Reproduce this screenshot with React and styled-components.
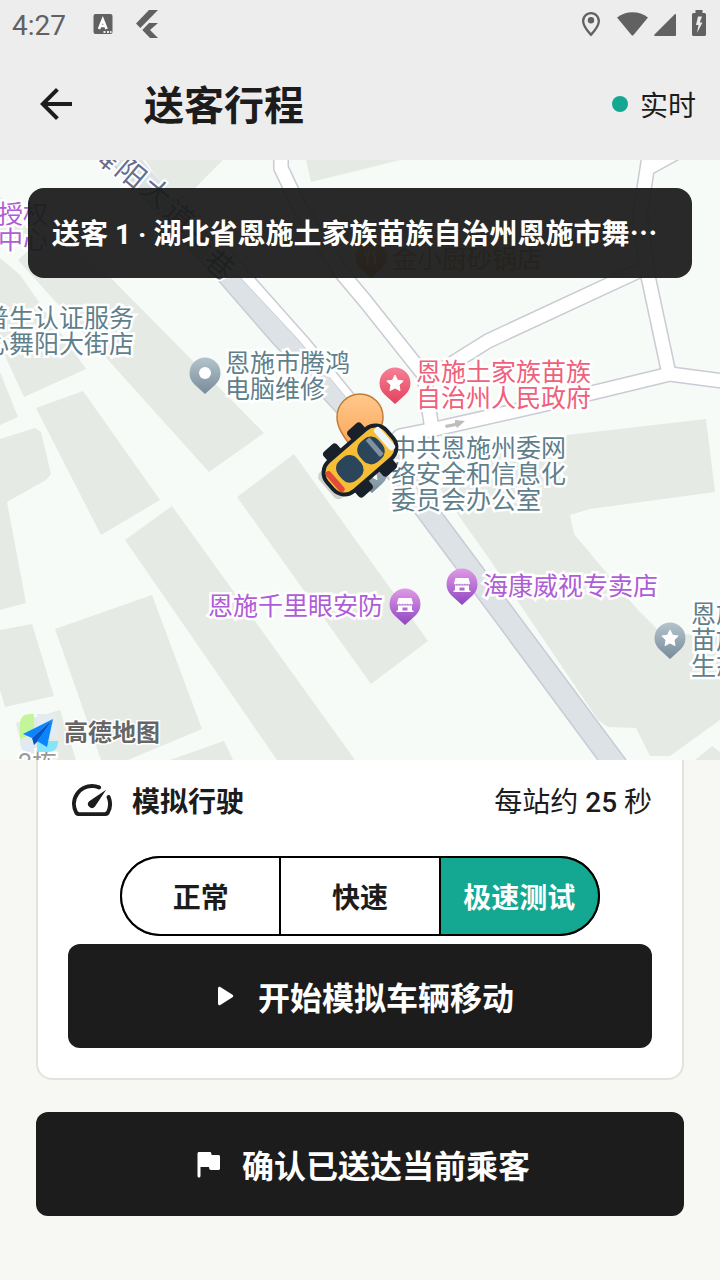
import React, { useState } from "react";
import styled, { createGlobalStyle } from "styled-components";

const ink = "#1b1c1b";
const teal = "#14a892";
const statusGrey = "#616161";
const poi = { slate: "#5f7f8c", purple: "#ae5dd6", rose: "#f0607a", amber: "#d08a50", grey: "#9a9a9a" };

const GlobalStyle = createGlobalStyle`
  *, *::before, *::after { box-sizing: border-box; }
  body {
    margin: 0;
    background: #f7f8f3;
    color: ${ink};
    font-family: Roboto, "Noto Sans CJK SC", sans-serif;
  }
  button { font: inherit; }
`;

const Screen = styled.div`
  min-height: 100vh;
  display: flex;
  flex-direction: column;
`;

const StatusBar = styled.div`
  height: 48px;
  padding: 0 12px;
  display: flex;
  align-items: center;
  justify-content: space-between;
  background: #ededed;
  color: ${statusGrey};
`;

const StatusGroup = styled.div`
  display: flex;
  align-items: center;
  gap: ${(p) => p.$gap}px;
`;

const Clock = styled.span`
  font-size: 28px;
  line-height: 32px;
  padding-top: 4px;
`;

const AppBar = styled.header`
  height: 112px;
  padding: 0 24px 0 32px;
  display: flex;
  align-items: center;
  background: #ededed;
`;

const BackButton = styled.button`
  display: flex;
  padding: 0;
  border: 0;
  background: none;
  color: inherit;
`;

const Title = styled.h1`
  flex: 1;
  margin: 0 0 0 64px;
  padding-top: 6px;
  font-size: 40px;
  line-height: 48px;
  font-weight: 700;
`;

const LiveStatus = styled.div`
  display: flex;
  align-items: center;
  gap: 12px;
`;

const LiveText = styled.span`
  padding-top: 6px;
  font-size: 28px;
  line-height: 40px;
`;

const LiveDot = styled.span`
  width: 16px;
  height: 16px;
  border-radius: 50%;
  background: ${teal};
`;

const MapView = styled.section`
  position: relative;
  height: 600px;
  overflow: hidden;
  background: #f6fbf8;
`;

const MapCanvas = styled.div`
  position: absolute;
  top: 0;
  left: calc(50% - 360px);
  width: 720px;
  height: 600px;
`;

const MapLayer = styled.svg`
  position: absolute;
  inset: 0;
  width: 100%;
  height: 100%;
`;

const MapLabel = styled.span`
  position: absolute;
  left: ${(p) => p.$x}px;
  top: ${(p) => p.$y}px;
  color: ${(p) => poi[p.$tone]};
  font-size: 25px;
  line-height: 26px;
  white-space: pre;
  -webkit-text-stroke: 5px #fff;
  paint-order: stroke fill;
`;

const MapBrand = styled.div`
  position: absolute;
  left: 18px;
  top: 552px;
  display: flex;
  align-items: center;
  gap: 4px;
  color: #666;
  font-size: 24px;
  line-height: 42px;
  font-weight: 700;
  -webkit-text-stroke: 3px #fff;
  paint-order: stroke fill;
`;

const StopBanner = styled.div`
  position: absolute;
  top: 28px;
  left: 28px;
  right: 28px;
  height: 90px;
  padding: 0 24px;
  border-radius: 16px;
  background: rgba(27, 28, 27, 0.94);
  color: #fff;
  font-size: 28px;
  line-height: 94px;
  font-weight: 700;
  white-space: nowrap;
  overflow: hidden;
`;

const Panel = styled.main`
  padding: 0 36px 64px;
  display: flex;
  flex-direction: column;
  gap: 32px;
`;

const Card = styled.section`
  padding: 16px 30px 30px;
  border: 2px solid #e2e3dd;
  border-top: 0;
  border-radius: 0 0 16px 16px;
  background: #fff;
`;

const CardHeader = styled.div`
  display: flex;
  align-items: center;
  gap: 16px;
  height: 48px;
  margin-bottom: 32px;
  font-size: 28px;
  line-height: 40px;
`;

const CardTitle = styled.h2`
  flex: 1;
  margin: 0;
  padding-top: 6px;
  font-size: 28px;
  font-weight: 700;
`;

const Estimate = styled.span`
  padding-top: 6px;
  b { font-weight: 500; }
`;

const SpeedOptions = styled.fieldset`
  display: grid;
  grid-template-columns: repeat(3, 1fr);
  gap: 2px;
  width: 480px;
  max-width: 100%;
  height: 80px;
  margin: 0 auto 8px;
  padding: 0;
  border: 2px solid #000;
  border-radius: 40px;
  background: #000;
  overflow: hidden;
`;

const SpeedOption = styled.label`
  display: flex;
  align-items: center;
  justify-content: center;
  background: #fff;
  font-size: 28px;
  font-weight: 700;
  cursor: pointer;
  &:has(input:checked) { background: ${teal}; color: #fff; }
  &:has(input:focus-visible) { text-decoration: underline; }
`;

const HiddenRadio = styled.input`
  appearance: none;
  width: 0;
  height: 0;
  margin: 0;
`;

const ActionButton = styled.button`
  width: 100%;
  height: 104px;
  padding: 0;
  display: flex;
  align-items: center;
  justify-content: center;
  gap: 16px;
  border: 0;
  border-radius: 12px;
  background: ${ink};
  color: #fff;
`;

const ActionText = styled.span`
  padding-top: 6px;
  font-size: 32px;
  line-height: 48px;
  font-weight: 700;
`;

const Icon = ({ size, d }) => (
  <svg width={size} height={size} viewBox="0 0 24 24" fill="currentColor" aria-hidden="true">
    <path d={d} />
  </svg>
);

const icons = {
  back: "M20 11H7.83l5.59-5.59L12 4l-8 8 8 8 1.41-1.41L7.83 13H20v-2z",
  speed:
    "M19.46 10a1 1 0 0 0-.07 1 7.55 7.55 0 0 1 .52 1.81 8 8 0 0 1-.69 4.73 1 1 0 0 1-.89.53H5.68a1 1 0 0 1-.89-.54A8 8 0 0 1 13 6.06a7.69 7.69 0 0 1 2.11.56 1 1 0 0 0 1-.07 1 1 0 0 0-.17-1.76A10 10 0 0 0 3.35 19a2 2 0 0 0 1.72 1h13.85a2 2 0 0 0 1.74-1 10 10 0 0 0 .55-8.89 1 1 0 0 0-1.75-.11zM10.59 12.59a2 2 0 0 0 2.83 2.83l5.66-8.49z",
  play: "M8 6.82v10.36c0 .79.87 1.27 1.54.84l8.14-5.18c.62-.39.62-1.29 0-1.69L9.54 5.98C8.87 5.55 8 6.03 8 6.82z",
  flag: "M14.4 6l-.24-1.2c-.09-.46-.5-.8-.98-.8H6c-.55 0-1 .45-1 1v15c0 .55.45 1 1 1s1-.45 1-1v-6h5.6l.24 1.2c.09.47.5.8.98.8H19c.55 0 1-.45 1-1V7c0-.55-.45-1-1-1h-4.6z",
};

const buildings = [
  "18,260 60,222 110,277 264,433 209,472",
  "0,258 20,275 86,369 24,397 0,345",
  "0,372 18,417 0,425",
  "0,197 28,222 50,250 0,240",
  "36,408 83,391 160,500 101,535",
  "0,439 35,428 41,432 51,474 46,480 7,502 26,603 0,610",
  "172,506 125,540 277,760 355,760",
  "294,454 237,497 371,684 428,641",
  "55,629 152,595 202,729 128,760 101,760",
  "170,760 224,741 233,760",
  "0,630 32,624 54,696 5,707 0,690",
  "16,723 60,710 76,760 25,760",
  "440,489 500,446 567,435 706,419 715,492 590,509 570,515 574,534 638,610 660,632 720,637 720,720 670,756 650,756 636,728 608,727 598,720 490,560",
  "695,760 712,746 720,752 720,760",
  "145,160 223,160 194,189 165,189",
  "306,160 400,160 360,170 311,182",
];

const roads = [
  "M281 150V168L298 204L340 271L366 302L424 375L432 430",
  "M650 150L640 215L648 276L669 374",
  "M650 167L690 145",
  "M647 267L488 341L448 366L424 382",
  "M730 382L670 374L550 403L435 429L400 436L388 450",
];

const shopGlyph = (
  <g>
    <path d="M-6.5 -27H6.5L8 -21.5Q6.700 -19.500 5.300 -21.500Q4 -19.500 2.700 -21.500Q1.300 -19.500 0 -21.500Q-1.300 -19.500 -2.700 -21.500Q-4 -19.500 -5.300 -21.500Q-6.700 -19.500 -8 -21.500Z" fill="#fff" />
    <path d="M-7 -19.500H7V-14.500H8.500V-13H-8.500V-14.500H-7ZM-2.500 -17.500V-14.500H2.500V-17.500Z" fill="#fff" fillRule="evenodd" />
  </g>
);
const starGlyph = (
  <path d="M0 -29L2.500 -23.800L8.200 -23L4 -19L5 -13.400L0 -16.100L-5 -13.400L-4 -19L-8.200 -23L-2.500 -23.800Z" fill="#fff" stroke="#fff" strokeLinejoin="round" />
);
const forkGlyph = (
  <path d="M-5 -28V-22M-2 -28V-22M-3.500 -24V-13M4 -28Q1 -24 4 -21V-13" stroke="#fff" strokeWidth="2" fill="none" />
);
const dotGlyph = <circle cy="-21" r="6" fill="#fff" />;

const Pin = ({ x, y, tone, children }) => (
  <g transform={`translate(${x} ${y})`}>
    <path d="M0 0L-10.500 -9.500A15.500 15.500 0 1 1 10.500 -9.500Z" fill={`url(#pin-${tone})`} />
    {children}
  </g>
);

const pinTones = {
  slate: ["#b4c4cc", "#778b99"],
  rose: ["#f58096", "#e4425c"],
  purple: ["#e09ae6", "#8e46c0"],
  amber: ["#ffb870", "#e07b20"],
};

const labels = [
  { x: -2, y: 42, tone: "purple", text: "授权\n中心" },
  { x: -16, y: 146, tone: "slate", text: "普生认证服务\n心舞阳大街店" },
  { x: 392, y: 87, tone: "amber", text: "金小厨砂锅店" },
  { x: 225, y: 191, tone: "slate", text: "恩施市腾鸿\n电脑维修" },
  { x: 416, y: 200, tone: "rose", text: "恩施土家族苗族\n自治州人民政府" },
  { x: 391, y: 276, tone: "slate", text: "中共恩施州委网\n络安全和信息化\n委员会办公室" },
  { x: 208, y: 434, tone: "purple", text: "恩施千里眼安防" },
  { x: 483, y: 414, tone: "purple", text: "海康威视专卖店" },
  { x: 691, y: 442, tone: "slate", text: "恩施\n苗族\n生态" },
  { x: 18, y: 591, tone: "grey", text: "2栋" },
];

const streetName = [
  ["舞", 105, 155],
  ["阳", 131, 174],
  ["大", 156, 193],
  ["道", 179, 216],
  ["一", 200, 240],
  ["巷", 219, 265],
];

const CityMap = () => (
  <MapCanvas>
    <MapLayer viewBox="0 160 720 600" aria-hidden="true">
      <defs>
        {Object.entries(pinTones).map(([name, [a, b]]) => (
          <linearGradient key={name} id={`pin-${name}`} x1="0" y1="0" x2="0" y2="1">
            <stop offset="0" stopColor={a} />
            <stop offset="1" stopColor={b} />
          </linearGradient>
        ))}
      </defs>
      <g fill="#e6eae4">
        {buildings.map((points) => (
          <polygon key={points} points={points} />
        ))}
      </g>
      <path d="M180 198L242 280L298 340L360 415L395 450L388 436L353 393L310 340L255 278L182 196Z" fill="#fff" stroke="#cacbd4" strokeWidth="1.500" />
      <g fill="none" strokeLinejoin="round">
        {roads.map((d) => <path key={d} d={d} stroke="#cacbd4" strokeWidth="16" />)}
        {roads.map((d) => <path key={d} d={d} stroke="#fff" strokeWidth="13" />)}
      </g>
      <path
        d="M105 155L218 280L270 340L338 414L415 513L450 560L598 760H626L477 560L442 513L405 460L360 415L298 340L242 280L138 155Z"
        fill="#dde2e6"
      />
      <path d="M105 155L218 280L270 340L338 414L415 513L450 560L598 760M626 760L477 560L442 513L420 482" fill="none" stroke="#cacbd4" strokeWidth="1.500" />
      <path d="M445 425L455 423V420L465 421L457 428L456 426L446 428Z" fill="#bdbdbd" />
      <g fontSize="29" fill="#646f8e" stroke="#fff" strokeWidth="4" paintOrder="stroke" textAnchor="middle">
        {streetName.map(([char, x, y]) => (
          <text key={char} transform={`translate(${x} ${y}) rotate(40)`} dy="10">{char}</text>
        ))}
      </g>
      <Pin x={205} y={394} tone="slate">{dotGlyph}</Pin>
      <Pin x={371} y={278} tone="amber">{forkGlyph}</Pin>
      <Pin x={395} y={404} tone="rose">{starGlyph}</Pin>
      <Pin x={372} y={493} tone="slate">{starGlyph}</Pin>
      <Pin x={405} y={625} tone="purple">{shopGlyph}</Pin>
      <Pin x={462} y={605} tone="purple">{shopGlyph}</Pin>
      <Pin x={670} y={659} tone="slate">{starGlyph}</Pin>
    </MapLayer>
    {labels.map(({ x, y, tone, text }) => (
      <MapLabel key={text} $x={x} $y={y} $tone={tone}>{text}</MapLabel>
    ))}
    <MapLayer viewBox="0 160 720 600" role="img" aria-label="车辆位置">
      <defs>
        <linearGradient id="stop-pin" x1="0" y1="0" x2="0" y2="1">
          <stop offset="0" stopColor="#ffc98c" />
          <stop offset="1" stopColor="#f99a4a" />
        </linearGradient>
      </defs>
      <path d="M360 462C354 446 337 434 337 417A23 23 0 0 1 383 417C383 434 366 446 360 462Z" fill="url(#stop-pin)" stroke="#c07c38" strokeWidth="1.500" />
      <g transform="translate(360 460) rotate(-41)">
        <rect x="-44" y="-17" width="12" height="34" rx="6" fill="#000" opacity=".16" />
        <g fill="#18202a">
          <rect x="-25" y="-30" width="18" height="15" rx="4" />
          <rect x="7" y="-30" width="18" height="15" rx="4" />
          <rect x="-25" y="15" width="18" height="15" rx="4" />
          <rect x="7" y="15" width="18" height="15" rx="4" />
        </g>
        <rect x="-39.500" y="-19.500" width="79" height="39" rx="15" fill="#f6bd35" stroke="#18202a" strokeWidth="4" />
        <rect x="-36" y="-13" width="6" height="26" rx="3" fill="#e04b3c" />
        <rect x="29" y="-14" width="7" height="28" rx="3" fill="#eef6fd" />
        <rect x="-26" y="-13" width="25" height="26" rx="10" fill="#2b465a" />
        <rect x="2" y="-13" width="25" height="26" rx="10" fill="#2b465a" />
        <rect x="17" y="-11" width="5" height="22" rx="1" fill="#8291a2" />
      </g>
    </MapLayer>
    <MapBrand>
      <svg width="42" height="42" viewBox="0 0 42 42" aria-hidden="true">
        <path d="M16 2V22L2 27V12Q2 2 12 2Z" fill="#c3f59a" />
        <path d="M19 2H30Q40 2 40 12V26H19Z" fill="#e3ecf0" />
        <path d="M2 29H16V40H12Q2 40 2 29Z" fill="#dfeaf2" />
        <path d="M19 29H40Q40 40 30 40H19Z" fill="#84e4fb" />
        <path d="M35 7L5 22L14 26Z" fill="#0a84ff" />
        <path d="M35 7L14 26L16 33L20 29Z" fill="#0654c8" />
        <path d="M35 7L19 29L29 35Z" fill="#0a84ff" />
      </svg>
      高德地图
    </MapBrand>
  </MapCanvas>
);

const speeds = ["正常", "快速", "极速测试"];

export default function App() {
  const [speed, setSpeed] = useState("极速测试");
  return (
    <Screen>
      <GlobalStyle />
      <StatusBar>
        <StatusGroup $gap={24}>
          <Clock>4:27</Clock>
          <svg width="68" height="28" viewBox="0 0 68 28" fill="currentColor" aria-hidden="true">
            <path d="M5.500 4H20.500Q22.500 4 22.500 6V22Q22.500 24 20.500 24H5.500Q3.500 24 3.500 22V6Q3.500 4 5.500 4Z" />
            <path d="M9 19L12.800 9.500L16.600 19M10.300 16H15.300" fill="none" stroke="#fff" strokeWidth="2.600" />
            <path d="M13.500 21H15.500V23H13.500ZM17 21H19V23H17ZM20 21H21.500V23H20Z" fill="#ededed" />
            <path d="M68 0H59L46 13.500L50.300 18ZM68 13H59L52.300 20L60 28H68L60 20Z" />
          </svg>
        </StatusGroup>
        <svg width="128" height="28" viewBox="580 10 128 28" fill="currentColor" aria-hidden="true">
          <path d="M591 12C586 12 582 16 582 21C582 27.500 591 36.500 591 36.500S600 27.500 600 21C600 16 596 12 591 12ZM591 33C588.500 30 584.300 25 584.300 21A6.700 6.700 0 0 1 597.700 21C597.700 25 593.500 30 591 33Z" fillRule="evenodd" />
          <circle cx="591" cy="20.300" r="3.200" />
          <path d="M617 17.500C626 10.500 639 10.500 648 17.500L633.500 35Q632.500 36 631.500 35Z" />
          <path d="M676 15V35Q676 36 675 36H655Q653.500 36 654.500 34.500L674.500 14.500Q676 13.500 676 15Z" />
          <path d="M695.500 10H702.500V13H704.500Q706 13 706 14.500V34.500Q706 36 704.500 36H693.500Q692 36 692 34.500V14.500Q692 13 693.500 13H695.500ZM698 16.500L696 25H698.500L697 33L702.500 22.500H699.700L702 16.500Z" fillRule="evenodd" />
        </svg>
      </StatusBar>

      <AppBar>
        <BackButton type="button" aria-label="返回">
          <Icon size={48} d={icons.back} />
        </BackButton>
        <Title>送客行程</Title>
        <LiveStatus>
          <LiveDot />
          <LiveText>实时</LiveText>
        </LiveStatus>
      </AppBar>

      <MapView>
        <CityMap />
        <StopBanner>送客 1 · 湖北省恩施土家族苗族自治州恩施市舞⋯</StopBanner>
      </MapView>

      <Panel>
        <Card>
          <CardHeader>
            <Icon size={48} d={icons.speed} />
            <CardTitle>模拟行驶</CardTitle>
            <Estimate>每站约 <b>25</b> 秒</Estimate>
          </CardHeader>
          <SpeedOptions aria-label="模拟速度">
            {speeds.map((name) => (
              <SpeedOption key={name}>
                <HiddenRadio type="radio" name="speed" checked={speed === name} onChange={() => setSpeed(name)} />
                {name}
              </SpeedOption>
            ))}
          </SpeedOptions>
          <ActionButton type="button">
            <Icon size={36} d={icons.play} />
            <ActionText>开始模拟车辆移动</ActionText>
          </ActionButton>
        </Card>
        <ActionButton type="button">
          <Icon size={36} d={icons.flag} />
          <ActionText>确认已送达当前乘客</ActionText>
        </ActionButton>
      </Panel>
    </Screen>
  );
}
